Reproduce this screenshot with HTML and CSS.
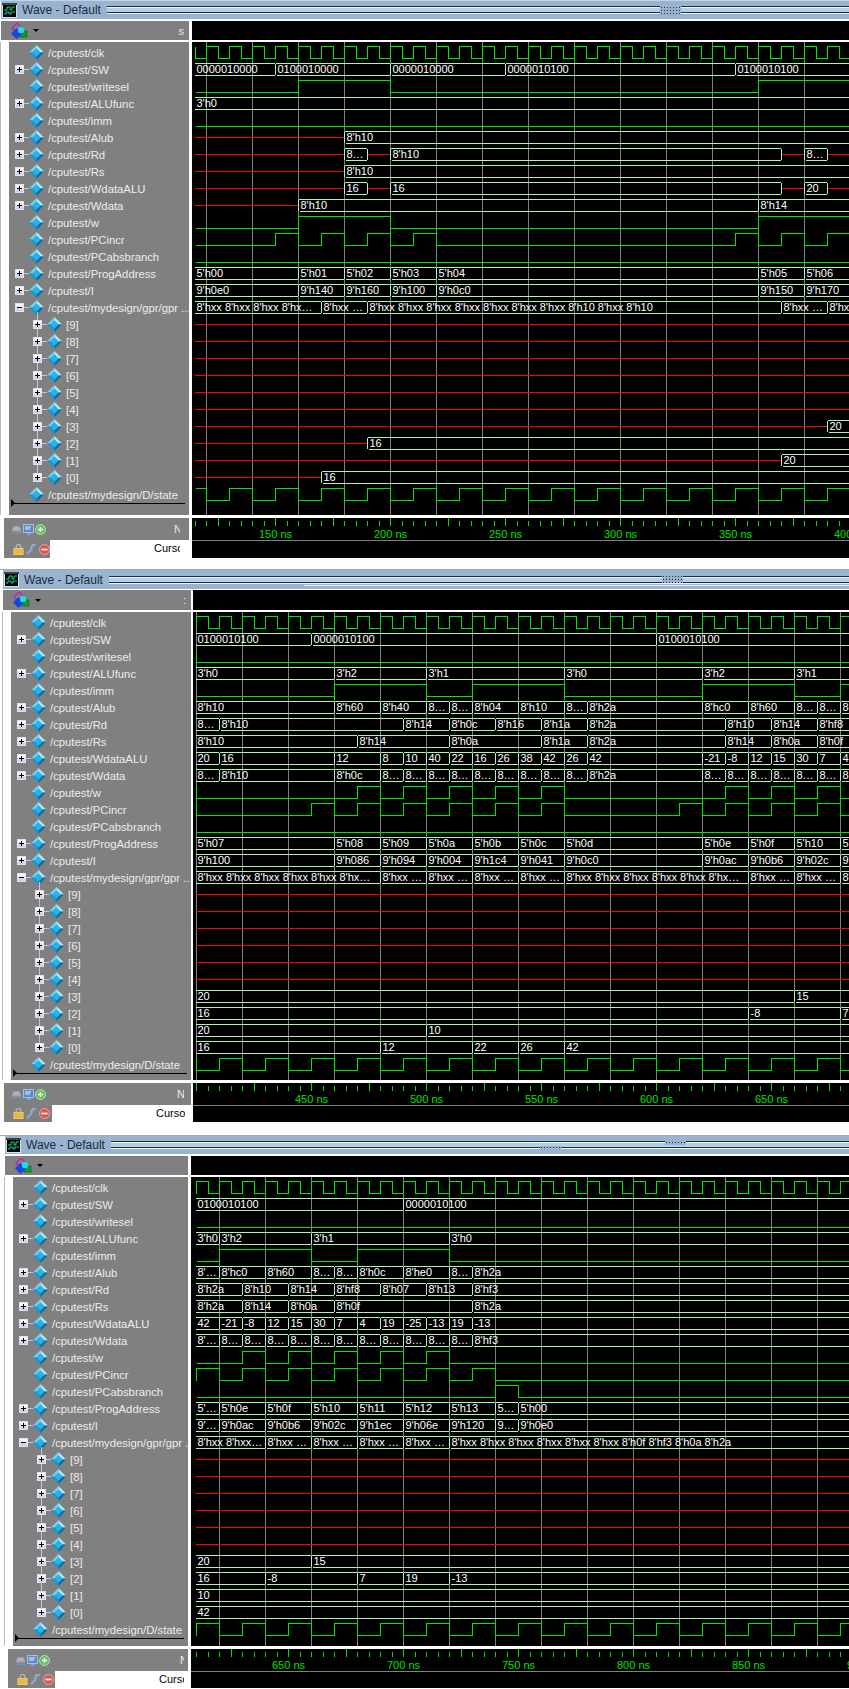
FILE: index.html
```html
<!DOCTYPE html>
<html lang="en">
<head>
    <meta charset="UTF-8">
    <meta name="viewport" content="width=device-width, initial-scale=1.0">
    <title>Wave - Default</title>
    <link rel="stylesheet" href="styles.css">
</head>
<body>
    <svg class="defs" width="0" height="0">
        <symbol id="i-diamond" viewBox="0 0 15 15">
            <polygon points="7.5,0 0,7.5 3.5,7.5 7.5,3.5" fill="#6fd2f6"/>
            <polygon points="7.5,0 15,7.5 11.5,7.5 7.5,3.5" fill="#a9ecff"/>
            <polygon points="0,7.5 7.5,15 7.5,11.5 3.5,7.5" fill="#1a96d0"/>
            <polygon points="15,7.5 7.5,15 7.5,11.5 11.5,7.5" fill="#0a6fa8"/>
            <polygon points="7.5,3.5 11.5,7.5 7.5,11.5 3.5,7.5" fill="#27b2ea"/>
        </symbol>
        <symbol id="i-wave" viewBox="0 0 15 15">
            <rect x="0.5" y="0.5" width="14" height="14" fill="#000" stroke="#d8e0e8"/>
            <rect x="0" y="0" width="15" height="2" fill="#39424c"/>
            <path d="M2 7H5V4H8V7H10V4H13" fill="none" stroke="#19e06a"/>
            <path d="M2 11H4V9H7V11H9V9H13" fill="none" stroke="#19c8c8"/>
        </symbol>
        <symbol id="i-tool" viewBox="0 0 17 16">
            <polygon points="6,0 11,5 6,10 1,5" fill="none" stroke="#c020c0" stroke-width="1.4"/>
            <rect x="9" y="8" width="7" height="6" fill="#109a30" stroke="#0a5a1c" stroke-width="0.6"/>
            <polygon points="5.5,5 11,10.5 5.5,16 0,10.5" fill="#1546e0"/>
            <circle cx="10" cy="7" r="3.2" fill="#25d8e8"/>
        </symbol>
        <symbol id="i-arrows" viewBox="0 0 11 10">
            <path d="M1 7H10M3 2H8L10 6H1Z" fill="#b0b4bc" stroke="#9aa0aa" stroke-width="0.8"/>
            <path d="M0 9H11" stroke="#6f8fc8"/>
        </symbol>
        <symbol id="i-mon" viewBox="0 0 11 11">
            <rect x="0.5" y="0.5" width="10" height="8" fill="#5f88c8" stroke="#9cc0f0"/>
            <path d="M2 3H8M2 5H7" stroke="#e8f0ff"/>
            <path d="M4 9H8V11H4Z" fill="#7f9fd8"/>
        </symbol>
        <symbol id="i-plus" viewBox="0 0 11 11">
            <circle cx="5.5" cy="5.5" r="5" fill="#6cc06c" stroke="#b0dcb0"/>
            <path d="M3 5.5H8M5.5 3V8" stroke="#e8ffe8" stroke-width="1.4"/>
        </symbol>
        <symbol id="i-lock" viewBox="0 0 11 12">
            <path d="M3 5V3A2.5 2.5 0 0 1 8 3V5" fill="none" stroke="#c0b8a8" stroke-width="1.4"/>
            <rect x="0.5" y="5" width="10" height="6.5" fill="#e8b840" stroke="#f0d070"/>
        </symbol>
        <symbol id="i-wrench" viewBox="0 0 11 11">
            <path d="M1 10L6 5M6 5A2.5 2.5 0 0 1 9.500 1.500" fill="none" stroke="#8fa8d8" stroke-width="2.400"/>
        </symbol>
        <symbol id="i-minus" viewBox="0 0 11 11">
            <circle cx="5.5" cy="5.5" r="5" fill="#d85858" stroke="#e8a8a8"/>
            <path d="M2.500 5.500H8.500" stroke="#fff" stroke-width="1.600"/>
        </symbol>
    </svg>

    <section class="win win-1">
        <header class="title">
            <svg class="title-icon"><use href="#i-wave"/></svg>
            <span class="title-text">Wave - Default</span>
            <div class="stripes"></div>
            <i class="grip"></i>
        </header>
        <div class="panes toolbar">
            <div class="tool-left">
                <svg class="tool-icon"><use href="#i-tool"/></svg>
                <i class="tool-arrow"></i>
                <span class="tool-mark">s</span>
            </div>
            <div></div>
            <div class="black"></div>
        </div>
        <div class="panes body">
            <div class="names-wrap"><div class="names"></div></div>
            <div></div>
            <svg class="wave"></svg>
        </div>
        <div class="panes foot">
            <div class="foot-left">
                <div class="foot-top">
                    <svg class="fi"><use href="#i-arrows"/></svg>
                    <svg class="fi"><use href="#i-mon"/></svg>
                    <svg class="fi"><use href="#i-plus"/></svg>
                    <span class="foot-now">Now</span>
                </div>
                <div class="foot-bot">
                    <div class="foot-tools">
                        <svg class="fi"><use href="#i-lock"/></svg>
                        <svg class="fi"><use href="#i-wrench"/></svg>
                        <svg class="fi"><use href="#i-minus"/></svg>
                    </div>
                    <div class="cursor"><span>Cursor 1</span></div>
                </div>
            </div>
            <div></div>
            <svg class="axis"></svg>
        </div>
    </section>

    <section class="win win-2">
        <header class="title">
            <svg class="title-icon"><use href="#i-wave"/></svg>
            <span class="title-text">Wave - Default</span>
            <div class="stripes"></div>
            <i class="grip"></i>
            <i class="stripe-extra"></i>
        </header>
        <div class="panes toolbar">
            <div class="tool-left">
                <svg class="tool-icon"><use href="#i-tool"/></svg>
                <i class="tool-arrow"></i>
                <span class="tool-mark">:</span>
            </div>
            <div></div>
            <div class="black"></div>
        </div>
        <div class="panes body">
            <div class="names-wrap"><div class="names"></div></div>
            <div></div>
            <svg class="wave"></svg>
        </div>
        <div class="panes foot">
            <div class="foot-left">
                <div class="foot-top">
                    <svg class="fi"><use href="#i-arrows"/></svg>
                    <svg class="fi"><use href="#i-mon"/></svg>
                    <svg class="fi"><use href="#i-plus"/></svg>
                    <span class="foot-now">Now</span>
                </div>
                <div class="foot-bot">
                    <div class="foot-tools">
                        <svg class="fi"><use href="#i-lock"/></svg>
                        <svg class="fi"><use href="#i-wrench"/></svg>
                        <svg class="fi"><use href="#i-minus"/></svg>
                    </div>
                    <div class="cursor"><span>Cursor 1</span></div>
                </div>
            </div>
            <div></div>
            <svg class="axis"></svg>
        </div>
    </section>

    <section class="win win-3">
        <header class="title">
            <svg class="title-icon"><use href="#i-wave"/></svg>
            <span class="title-text">Wave - Default</span>
            <div class="stripes"></div>
            <i class="grip grip-short"></i>
            <i class="grip grip-low"></i>
        </header>
        <div class="panes toolbar">
            <div class="tool-left">
                <svg class="tool-icon"><use href="#i-tool"/></svg>
                <i class="tool-arrow"></i>
            </div>
            <div></div>
            <div class="black"></div>
        </div>
        <div class="panes body">
            <div class="names-wrap"><div class="names"></div></div>
            <div></div>
            <svg class="wave"></svg>
        </div>
        <div class="panes foot">
            <div class="foot-left">
                <div class="foot-top">
                    <svg class="fi"><use href="#i-arrows"/></svg>
                    <svg class="fi"><use href="#i-mon"/></svg>
                    <svg class="fi"><use href="#i-plus"/></svg>
                    <span class="foot-now">Now</span>
                </div>
                <div class="foot-bot">
                    <div class="foot-tools">
                        <svg class="fi"><use href="#i-lock"/></svg>
                        <svg class="fi"><use href="#i-wrench"/></svg>
                        <svg class="fi"><use href="#i-minus"/></svg>
                    </div>
                    <div class="cursor"><span>Cursor 1</span></div>
                </div>
            </div>
            <div></div>
            <svg class="axis"></svg>
        </div>
    </section>

    <script src="wave.js"></script>
</body>
</html>
```

FILE: styles.css
```css
body {
    margin: 0;
    background: #fff;
    font-family: "Liberation Sans", Arial, sans-serif;
    overflow: hidden;
}

.defs { position: absolute; }

.win { padding-left: var(--in); border-top: 1px solid var(--edge); }

.win-1 { --in: 1px; --left: 188px; --sash: 3px; --pane: 473px; --gap: 2px; --tool: 19px; --foot-in: 3px; --tools: 46px; --cur-r: 9px; --now-r: 9px; --now-w: 6px; --edge: #c6d2de; --title: 18px; margin-bottom: 11px; }
.win-2 { --in: 3px; --left: 188px; --sash: 2px; --pane: 468px; --gap: 1px; --tool: 20px; --foot-in: 1px; --tools: 48px; --cur-r: 6px; --now-r: 7px; --now-w: 7px; --edge: #a8a8a8; --title: 19px; margin-bottom: 13px; }
.win-3 { --in: 5px; --left: 183px; --sash: 3px; --pane: 469px; --gap: 2px; --tool: 19px; --foot-in: 3px; --tools: 47px; --cur-r: 4px; --now-r: 4px; --now-w: 4px; --edge: #a8a8a8; --title: 18px; }

/* title bar */
.title {
    position: relative;
    display: flex;
    align-items: center;
    height: var(--title);
    margin-bottom: var(--gap);
    background: #99b4d1;
}

.title-icon { width: 15px; height: 15px; margin-left: 1px; flex: none; }

.title-text {
    margin: 0 6px 0 5px;
    font-size: 12px;
    color: #1c2a38;
    white-space: nowrap;
}

.stripes {
    flex: 1;
    height: 8px;
    background: linear-gradient(to bottom,
        #1f2d3b 0, #1f2d3b 1px,
        #eef6fc 1px, #eef6fc 2px,
        #b4cfe6 2px, #b4cfe6 6px,
        #1f2d3b 6px, #1f2d3b 7px,
        #eef6fc 7px, #eef6fc 8px);
}

.grip {
    position: absolute;
    left: 659px;
    top: 5px;
    width: 21px;
    height: 8px;
    background: #99b4d1 radial-gradient(#1f2d3b 35%, transparent 40%) 0 0 / 3px 3px;
}

.grip-short { left: 660px; height: 4px; }
.grip-low { left: 535px; top: 10px; height: 3px; }

.stripe-extra {
    position: absolute;
    left: 301px;
    right: 0;
    top: 15px;
    height: 1px;
    background: #eef6fc;
}

/* shared three column layout */
.panes {
    display: grid;
    grid-template-columns: var(--left) var(--sash) 1fr;
}

.toolbar { height: var(--tool); }
.black { background: #000; }

.tool-left {
    position: relative;
    display: flex;
    align-items: center;
    background: #808080;
}

.tool-icon { width: 17px; height: 16px; margin-left: 10px; }

.tool-arrow {
    width: 0;
    height: 0;
    margin-left: 5px;
    border: 3px solid transparent;
    border-top: 3px solid #000;
    border-bottom: 0;
}

.tool-mark {
    margin-left: auto;
    margin-right: 5px;
    font-size: 11px;
    color: #ececec;
}

/* signal names */
.body {
    height: var(--pane);
    margin-top: 2px;
}

.names-wrap {
    padding-left: 8px;
    min-width: 0;
    border-left: 1px solid #b8b8b8;
    margin-left: -1px;
}

.names {
    height: 100%;
    box-sizing: border-box;
    padding-top: 2px;
    overflow: hidden;
    background: #808080;
}

.row {
    display: flex;
    align-items: center;
    height: 17px;
    padding-left: 6px;
    white-space: nowrap;
}

.row-child { padding-left: 24px; }

.tog {
    position: relative;
    flex: none;
    box-sizing: border-box;
    width: 9px;
    height: 9px;
    margin-right: 5px;
    background: linear-gradient(#fff, #c4cbe4);
    border: 1px solid #dfe3ee;
}

.tog::before, .tog-plus::after {
    content: "";
    position: absolute;
    background: #000;
}

.tog::before { left: 1px; top: 3px; width: 5px; height: 1px; }
.tog-plus::after { left: 3px; top: 1px; width: 1px; height: 5px; }

/* dashes between the box and the diamond */
.tog i {
    position: absolute;
    left: 8px;
    top: 3px;
    width: 5px;
    height: 1px;
    background: #c8c8c8;
}

.row-child .tog u {
    position: absolute;
    left: 3px;
    top: -9px;
    width: 1px;
    height: 8px;
    background: #c8c8c8;
}

.tog-none { visibility: hidden; }

.dia { flex: none; width: 15px; height: 15px; margin-right: 4px; }

.name {
    font-size: 11.3px;
    color: #ececec;
}

.names-end {
    position: relative;
    height: 1px;
    margin: 0 4px 0 2px;
    background: #000;
}

.names-end::before {
    content: "";
    position: absolute;
    left: 0;
    top: -4px;
    border: 4px solid transparent;
    border-left: 4px solid #000;
    border-right: 0;
}

/* waves */
.wave, .axis {
    display: block;
    width: 100%;
    height: 100%;
    background: #000;
    shape-rendering: crispEdges;
}

.wave text {
    font-size: 11px;
    fill: #fff;
    shape-rendering: auto;
}

.axis text {
    font-size: 11px;
    fill: #00e000;
    text-anchor: middle;
}

.l-grid { stroke: #808080; fill: none; }
.l-dig { stroke: #00ea00; fill: none; }
.l-bus { stroke: #b0f2b0; fill: none; }
.l-x { stroke: #ff0000; fill: none; }
.l-tick { stroke: #00e000; fill: none; }

/* footer */
.foot {
    height: 40px;
    margin-top: 3px;
}

.win-3 .foot, .win-2 .foot { height: 39px; }

.foot-left {
    display: flex;
    flex-direction: column;
    margin-left: var(--foot-in);
    background: #808080;
    min-width: 0;
}

.foot-top {
    display: flex;
    align-items: center;
    gap: 1px;
    height: 22px;
    padding-left: 7px;
}

.foot-bot { display: flex; flex: 1; min-height: 0; }

.foot-tools {
    display: flex;
    align-items: center;
    gap: 2px;
    box-sizing: border-box;
    width: var(--tools);
    padding-left: 9px;
}

.fi { width: 11px; height: 11px; flex: none; }

.foot-now {
    width: var(--now-w);
    margin-left: auto;
    margin-right: var(--now-r);
    overflow: hidden;
    font-size: 11px;
    color: #ececec;
}

.cursor {
    flex: 1;
    min-width: 0;
    padding: 2px var(--cur-r) 0 104px;
    background: #fff;
    font-size: 11px;
    color: #000;
    white-space: nowrap;
}

.cursor span { display: block; overflow: hidden; }
```

FILE: wave.js
```js
// questa-style wave window: names on the left, waves drawn into svg on the right

const PX_PER_NS = 2.3;
const RIGHT = 849;

function every(from, to, step) {
    const out = [];
    for (let t = from; t <= to; t += step) out.push(t);
    return out;
}

function dig(init, times) { return { kind: "d", init: init, times: times }; }

// bus(t, label, t, label, ...), a null label is an unknown value (red line)
function bus() {
    const segs = [];
    for (let i = 0; i < arguments.length; i += 2) segs.push([arguments[i], arguments[i + 1]]);
    return { kind: "b", segs: segs };
}

const E = "8\u2026";
const XXE = "8'hxx \u2026";
const XX6 = "8'hxx 8'hxx 8'hxx 8'hxx 8'hxx 8'hx\u2026";

const NAMES = [
    ["/cputest/clk", 0], ["/cputest/SW", 1], ["/cputest/writesel", 0], ["/cputest/ALUfunc", 1],
    ["/cputest/imm", 0], ["/cputest/Alub", 1], ["/cputest/Rd", 1], ["/cputest/Rs", 1],
    ["/cputest/WdataALU", 1], ["/cputest/Wdata", 1], ["/cputest/w", 0], ["/cputest/PCincr", 0],
    ["/cputest/PCabsbranch", 0], ["/cputest/ProgAddress", 1], ["/cputest/I", 1],
    ["/cputest/mydesign/gpr/gpr ...", 2],
    ["[9]", 3], ["[8]", 3], ["[7]", 3], ["[6]", 3], ["[5]", 3],
    ["[4]", 3], ["[3]", 3], ["[2]", 3], ["[1]", 3], ["[0]", 3],
    ["/cputest/mydesign/D/state", 0]
];

const WINDOWS = [
    {
        start: 115, t0: 200, x0: 390.5, end: 400,
        rows: [
            dig(1, every(115, 400, 5)),
            bus(115, "0000010000", 150, "0100010000", 200, "0000010000", 250, "0000010100", 350, "0100010100"),
            dig(0, [160, 200, 360]),
            bus(115, "3'h0"),
            dig(0, []),
            bus(115, null, 180, "8'h10"),
            bus(115, null, 180, E, 190, null, 200, "8'h10", 370, null, 380, E, 390, null),
            bus(115, null, 180, "8'h10"),
            bus(115, null, 180, "16", 190, null, 200, "16", 370, null, 380, "20", 390, null),
            bus(115, null, 160, "8'h10", 360, "8'h14"),
            dig(0, [160, 200, 360]),
            dig(0, [150, 160, 170, 180, 190, 200, 210, 220, 350, 360, 370, 380, 390]),
            dig(0, []),
            bus(115, "5'h00", 160, "5'h01", 180, "5'h02", 200, "5'h03", 220, "5'h04", 360, "5'h05", 380, "5'h06"),
            bus(115, "9'h0e0", 160, "9'h140", 180, "9'h160", 200, "9'h100", 220, "9'h0c0", 360, "9'h150", 380, "9'h170"),
            bus(115, "8'hxx 8'hxx 8'hxx 8'hx\u2026", 170, XXE, 190,
                "8'hxx 8'hxx 8'hxx 8'hxx 8'hxx 8'hxx 8'hxx 8'h10 8'hxx 8'h10", 370, XXE, 390, XXE),
            bus(115, null), bus(115, null), bus(115, null), bus(115, null), bus(115, null), bus(115, null),
            bus(115, null, 390, "20"),
            bus(115, null, 190, "16"),
            bus(115, null, 370, "20"),
            bus(115, null, 170, "16"),
            dig(1, every(120, 400, 10))
        ]
    },
    {
        start: 400, t0: 600, x0: 656.5, end: 690,
        rows: [
            dig(0, every(400, 690, 5)),
            bus(400, "0100010100", 450, "0000010100", 600, "0100010100"),
            dig(1, [400]),
            bus(400, "3'h0", 460, "3'h2", 500, "3'h1", 560, "3'h0", 620, "3'h2", 660, "3'h1"),
            dig(0, [460, 500, 520, 560, 620, 660, 680]),
            bus(400, "8'h10", 460, "8'h60", 480, "8'h40", 500, E, 510, E, 520, "8'h04", 540, "8'h10", 560, E,
                570, "8'h2a", 620, "8'hc0", 640, "8'h60", 660, E, 670, E, 680, E),
            bus(400, E, 410, "8'h10", 490, "8'h14", 510, "8'h0c", 530, "8'h16", 550, "8'h1a", 570, "8'h2a",
                630, "8'h10", 650, "8'h14", 670, "8'hf8"),
            bus(400, "8'h10", 470, "8'h14", 510, "8'h0a", 550, "8'h1a", 570, "8'h2a", 630, "8'h14", 650, "8'h0a", 670, "8'h0f"),
            bus(400, "20", 410, "16", 460, "12", 480, "8", 490, "10", 500, "40", 510, "22", 520, "16", 530, "26",
                540, "38", 550, "42", 560, "26", 570, "42", 620, "-21", 630, "-8", 640, "12", 650, "15", 660, "30",
                670, "7", 680, "4"),
            bus(400, E, 410, "8'h10", 460, "8'h0c", 480, E, 490, E, 500, E, 510, E, 520, E, 530, E, 540, E, 550, E,
                560, E, 570, "8'h2a", 620, E, 630, E, 640, E, 650, E, 660, E, 670, E, 680, E),
            dig(1, [400, 470, 480, 490, 500, 510, 520, 530, 540, 550, 560, 630, 640, 650, 660, 670, 680]),
            dig(1, [400, 450, 460, 470, 480, 490, 500, 510, 520, 530, 540, 550, 560, 610, 620, 630, 640, 650, 660, 670, 680]),
            dig(0, []),
            bus(400, "5'h07", 460, "5'h08", 480, "5'h09", 500, "5'h0a", 520, "5'h0b", 540, "5'h0c", 560, "5'h0d",
                620, "5'h0e", 640, "5'h0f", 660, "5'h10", 680, "5'h11"),
            bus(400, "9'h100", 460, "9'h086", 480, "9'h094", 500, "9'h004", 520, "9'h1c4", 540, "9'h041", 560, "9'h0c0",
                620, "9'h0ac", 640, "9'h0b6", 660, "9'h02c", 680, "9'h1ec"),
            bus(400, XX6, 480, XXE, 500, XXE, 520, XXE, 540, XXE, 560, XX6, 640, XXE, 660, XXE, 680, XXE),
            bus(400, null), bus(400, null), bus(400, null), bus(400, null), bus(400, null), bus(400, null),
            bus(400, "20", 660, "15"),
            bus(400, "16", 640, "-8", 680, "7"),
            bus(400, "20", 500, "10"),
            bus(400, "16", 480, "12", 520, "22", 540, "26", 560, "42"),
            dig(1, every(400, 690, 10))
        ]
    },
    {
        start: 610, t0: 700, x0: 403.5, end: 900,
        rows: [
            dig(0, every(610, 900, 5)),
            bus(610, "0100010100", 700, "0000010100"),
            dig(0, []),
            bus(610, "3'h0", 620, "3'h2", 660, "3'h1", 720, "3'h0"),
            dig(0, [620, 660, 680, 720]),
            bus(610, "8'\u2026", 620, "8'hc0", 640, "8'h60", 660, E, 670, E, 680, "8'h0c", 700, "8'he0", 720, E, 730, "8'h2a"),
            bus(610, "8'h2a", 630, "8'h10", 650, "8'h14", 670, "8'hf8", 690, "8'h07", 710, "8'h13", 730, "8'hf3"),
            bus(610, "8'h2a", 630, "8'h14", 650, "8'h0a", 670, "8'h0f", 730, "8'h2a"),
            bus(610, "42", 620, "-21", 630, "-8", 640, "12", 650, "15", 660, "30", 670, "7", 680, "4", 690, "19",
                700, "-25", 710, "-13", 720, "19", 730, "-13"),
            bus(610, "8'\u2026", 620, E, 630, E, 640, E, 650, E, 660, E, 670, E, 680, E, 690, E, 700, E, 710, E, 720, E, 730, "8'hf3"),
            dig(0, [630, 640, 650, 660, 670, 680, 690, 700, 710, 720]),
            dig(0, [610, 620, 630, 640, 650, 660, 670, 680, 690, 700, 710, 720, 730, 740]),
            dig(0, [740, 750]),
            bus(610, "5'\u2026", 620, "5'h0e", 640, "5'h0f", 660, "5'h10", 680, "5'h11", 700, "5'h12", 720, "5'h13", 740, "5\u2026", 750, "5'h00"),
            bus(610, "9'\u2026", 620, "9'h0ac", 640, "9'h0b6", 660, "9'h02c", 680, "9'h1ec", 700, "9'h06e", 720, "9'h120", 740, "9\u2026", 750, "9'h0e0"),
            bus(610, "8'hxx 8'hxx\u2026", 640, XXE, 660, XXE, 680, XXE, 700, XXE, 720,
                "8'hxx 8'hxx 8'hxx 8'hxx 8'hxx 8'hxx 8'h0f 8'hf3 8'h0a 8'h2a"),
            bus(610, null), bus(610, null), bus(610, null), bus(610, null), bus(610, null), bus(610, null),
            bus(610, "20", 660, "15"),
            bus(610, "16", 640, "-8", 680, "7", 700, "19", 720, "-13"),
            bus(610, "10"),
            bus(610, "42"),
            dig(0, every(610, 900, 10))
        ]
    }
];

function buildNames(el) {
    let html = "";
    for (const [name, kind] of NAMES) {
        const child = kind === 3;
        let tog = '<span class="tog tog-none"></span>';
        if (kind === 1 || child) tog = '<span class="tog tog-plus"><i></i><u></u></span>';
        if (kind === 2) tog = '<span class="tog"><i></i></span>';
        html += '<div class="row' + (child ? " row-child" : "") + '">' + tog +
            '<svg class="dia"><use href="#i-diamond"/></svg><span class="name">' + name + "</span></div>";
    }
    el.innerHTML = html + '<div class="names-end"></div>';
}

function buildWave(svg, win) {
    const left = svg.getBoundingClientRect().left;
    const width = RIGHT - left + 2;
    const height = svg.getBoundingClientRect().height;
    const X = t => Math.floor(win.x0 + (t - win.t0) * PX_PER_NS - left) + 0.5;
    const tFirst = win.start;
    let out = "";

    // grid every 20ns
    let grid = "";
    for (let t = Math.ceil(tFirst / 20) * 20; X(t) < width; t += 20) grid += "M" + X(t) + " 0V" + height;
    out += '<path class="l-grid" d="' + grid + '"/>';

    win.rows.forEach((sig, i) => {
        const y = 10 + 17 * i + 0.5;
        const hi = y - 6;
        const lo = y + 6;
        if (sig.kind === "d") {
            let v = sig.init;
            let d = "M" + X(tFirst) + " " + (v ? hi : lo);
            for (const t of sig.times) {
                v = 1 - v;
                d += "H" + X(t) + "V" + (v ? hi : lo);
            }
            out += '<path class="l-dig" d="' + d + "H" + width + '"/>';
            return;
        }
        let lines = "";
        let reds = "";
        let texts = "";
        sig.segs.forEach((seg, k) => {
            const a = k === 0 ? X(seg[0]) - 1 : X(seg[0]);
            const next = sig.segs[k + 1];
            const b = next ? X(next[0]) : width;
            if (seg[1] === null) {
                reds += "M" + a + " " + y + "H" + b;
                return;
            }
            if (k > 0) lines += "M" + (a + 1) + " " + hi + "L" + a + " " + (hi + 1) + "V" + (lo - 1) + "L" + (a + 1) + " " + lo;
            lines += "M" + (k > 0 ? a + 1 : a) + " " + hi + "H" + (next ? b - 1 : b);
            if (next) lines += "L" + b + " " + (hi + 1) + "V" + (lo - 1) + "L" + (b - 1) + " " + lo;
            else lines += "M" + b + " " + lo;
            lines += "H" + (k > 0 ? a + 1 : a);
            texts += '<text x="' + (a + 2) + '" y="' + (y + 3.5) + '">' + seg[1] + "</text>";
        });
        if (reds) out += '<path class="l-x" d="' + reds + '"/>';
        if (lines) out += '<path class="l-bus" d="' + lines + '"/>';
        out += texts;
    });
    svg.innerHTML = out;
}

function buildAxis(svg, win) {
    const left = svg.getBoundingClientRect().left;
    const width = RIGHT - left + 2;
    const X = t => Math.floor(win.x0 + (t - win.t0) * PX_PER_NS - left) + 0.5;
    let ticks = "";
    let labels = "";
    for (let t = win.start; X(t) < width + 20; t += 5) {
        const major = t % 25 === 0;
        ticks += "M" + X(t) + " " + (major ? 0 : 3) + "V8";
        // no label where it would be cut by the left edge of the pane
        if (t % 50 === 0 && X(t) > 20) labels += '<text x="' + X(t) + '" y="20">' + t + " ns</text>";
    }
    svg.innerHTML = '<path class="l-tick" d="' + ticks + '"/><path class="l-grid" d="M0 22.5H' + width + '"/>' + labels;
}

document.querySelectorAll(".win").forEach((el, i) => {
    buildNames(el.querySelector(".names"));
    buildWave(el.querySelector(".wave"), WINDOWS[i]);
    buildAxis(el.querySelector(".axis"), WINDOWS[i]);
});
```
